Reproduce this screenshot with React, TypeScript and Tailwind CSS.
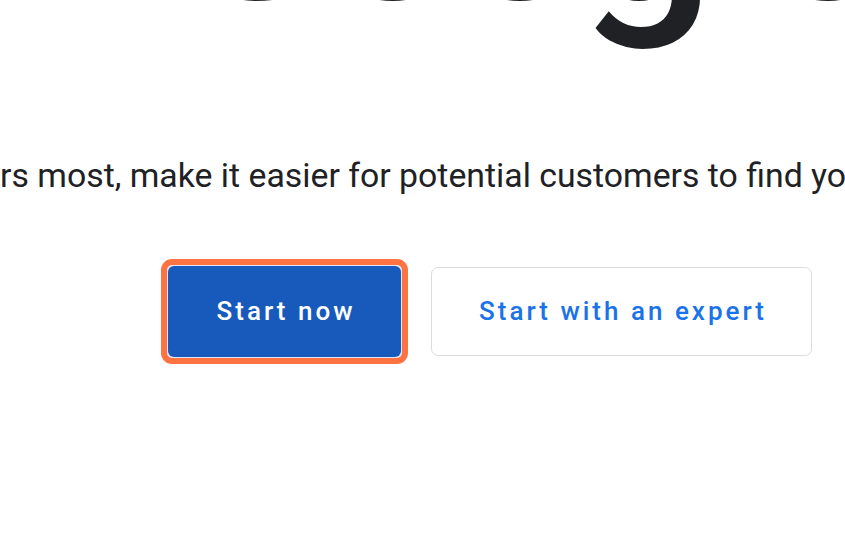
export default function App() {
  return (
    <div className="w-[845px] h-[557px] overflow-hidden bg-white [font-family:Roboto,Arial,sans-serif] flex flex-col">
      <h1 className="mt-[-203px] pl-[170px] text-[240px] leading-none font-medium tracking-[-9px] text-[#202124] whitespace-nowrap">
        Google
      </h1>
      <div className="mt-[119px] flex text-[33.8px] leading-[40px] text-[#202124] whitespace-nowrap">
        <div className="w-0 flex justify-end">
          <span>Show up where it matte</span>
        </div>
        <span>rs most, make it easier for potential customers to find you.</span>
      </div>
      <div className="mt-[63px] flex items-center pl-[161px] gap-[23px]">
        <div className="rounded-[11px] border-[6px] border-[#ff7343] bg-[#dfe6f5] p-px">
          <button className="w-[233px] h-[91px] rounded-[6px] bg-[#185abc] text-white text-[26px] font-medium tracking-[3px] pl-[3px]">
            Start now
          </button>
        </div>
        <button className="w-[381px] h-[89px] rounded-[7px] border border-[#dadce0] bg-white text-[#1a73e8] text-[26px] font-medium tracking-[3px] pl-[3px]">
          Start with an expert
        </button>
      </div>
    </div>
  );
}
